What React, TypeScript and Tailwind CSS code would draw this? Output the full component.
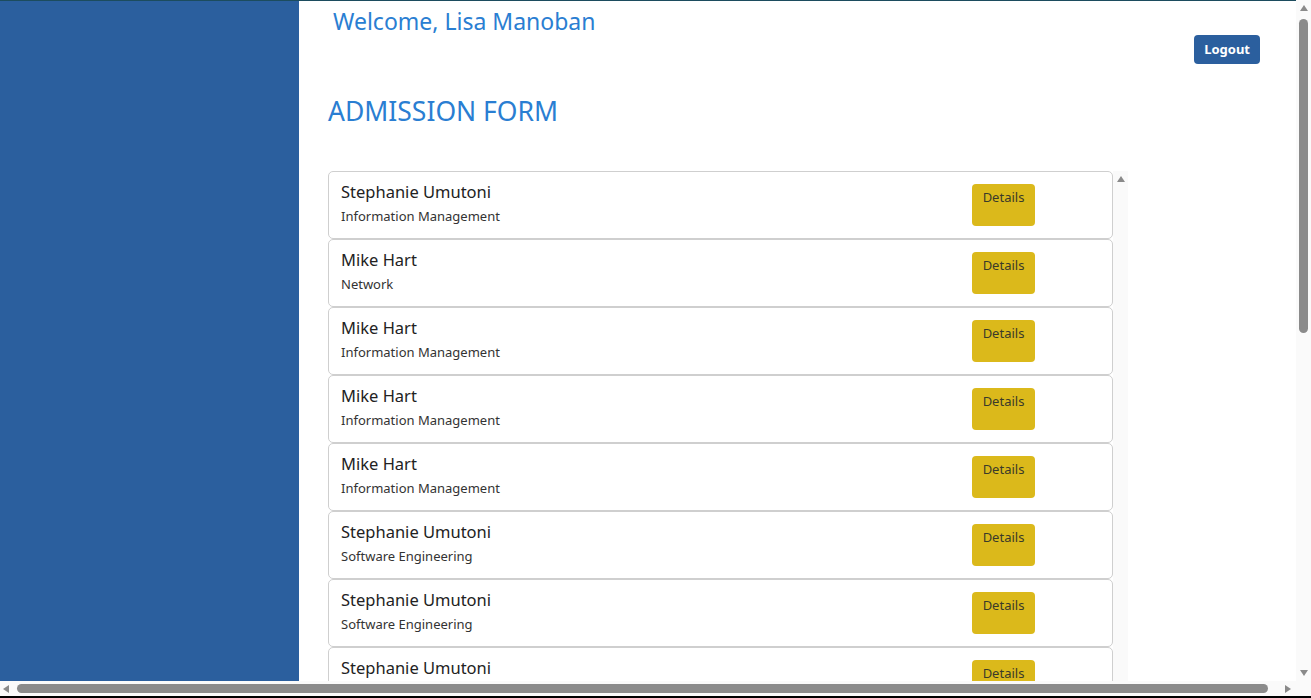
import React from "react";

const applicants = [
  { name: "Stephanie Umutoni", program: "Information Management" },
  { name: "Mike Hart", program: "Network" },
  { name: "Mike Hart", program: "Information Management" },
  { name: "Mike Hart", program: "Information Management" },
  { name: "Mike Hart", program: "Information Management" },
  { name: "Stephanie Umutoni", program: "Software Engineering" },
  { name: "Stephanie Umutoni", program: "Software Engineering" },
  { name: "Stephanie Umutoni", program: "Software Engineering" },
  { name: "Mike Hart", program: "Network" },
  { name: "Mike Hart", program: "Information Management" },
];

// the window's own scrollbars show in the screenshot, so draw them
const Arrow = ({ dir }: { dir: "up" | "down" | "left" | "right" }) => {
  const points = {
    up: "4,0 8,6 0,6",
    down: "0,0 8,0 4,6",
    left: "6,0 6,8 0,4",
    right: "0,0 6,4 0,8",
  }[dir];
  const vertical = dir === "up" || dir === "down";
  return (
    <svg width={vertical ? 8 : 6} height={vertical ? 6 : 8} viewBox={vertical ? "0 0 8 6" : "0 0 6 8"}>
      <polygon points={points} fill="#8a8a8a" />
    </svg>
  );
};

const ApplicantCard = ({ name, program }: { name: string; program: string }) => {
  return (
    <div className="flex h-[68px] justify-between rounded-[5px] border border-[#cfcfcf] bg-white pl-[12px] pr-[77px]">
      <div className="pt-[9px]">
        <h3 className="text-[16.5px] leading-[22px] text-[#222]">{name}</h3>
        <p className="mt-[4px] text-[13px] leading-[18px] text-[#333]">{program}</p>
      </div>
      <button className="mt-[12px] flex h-[42px] w-[63px] justify-center self-start rounded-[4px] bg-[#dbb91b] pt-[4px] text-[13px] leading-[18px] text-[#3a3a2a]">
        Details
      </button>
    </div>
  );
};

export default function App() {
  return (
    <div
      className="flex h-screen w-screen flex-col overflow-hidden bg-white"
      style={{ fontFamily: '"Noto Sans", "Open Sans", sans-serif' }}
    >
      <div className="flex min-h-0 flex-1">
        <div className="min-w-0 flex-1 overflow-hidden">
          <div className="flex min-h-full w-[1311px] border-t border-[#1c4c5e]">
            <aside className="w-[299px] shrink-0 bg-[#2b5f9e]" />
            <main className="flex-1 pl-[29px]">
              <div className="flex justify-between pr-[51px]">
                <h2 className="pl-[5px] pt-[5px] text-[23px] leading-[30px] text-[#2a7ed2]">
                  Welcome, Lisa Manoban
                </h2>
                <button className="mt-[34px] h-[29px] rounded-[4px] bg-[#2b5f9e] px-[10px] text-[13px] font-bold text-white">
                  Logout
                </button>
              </div>
              <h1 className="mt-[29px] text-[26.5px] leading-[36px] text-[#2a7ed2]">ADMISSION FORM</h1>
              <div className="mt-[42px] flex w-[800px]">
                <div className="w-[785px]">
                  {applicants.map((a, i) => (
                    <ApplicantCard key={i} name={a.name} program={a.program} />
                  ))}
                </div>
                <div className="flex w-[15px] flex-col items-center bg-[#fafafa] pt-[5px]">
                  <Arrow dir="up" />
                </div>
              </div>
            </main>
          </div>
        </div>
        <div className="flex w-[15px] shrink-0 flex-col items-center bg-[#fafafa] pt-[5px] pb-[5px]">
          <Arrow dir="up" />
          <div className="mt-[8px] h-[314px] w-[9px] rounded-full bg-[#8b8b8b]" />
          <div className="flex-1" />
          <Arrow dir="down" />
        </div>
      </div>
      <div className="flex h-[15px] shrink-0 items-center bg-[#fafafa] pl-[3px]">
        <Arrow dir="left" />
        <div className="ml-[8px] h-[9px] w-[1251px] rounded-full bg-[#8b8b8b]" />
        <div className="ml-[17px]">
          <Arrow dir="right" />
        </div>
      </div>
      <div className="h-[2px] shrink-0 bg-black" />
    </div>
  );
}
